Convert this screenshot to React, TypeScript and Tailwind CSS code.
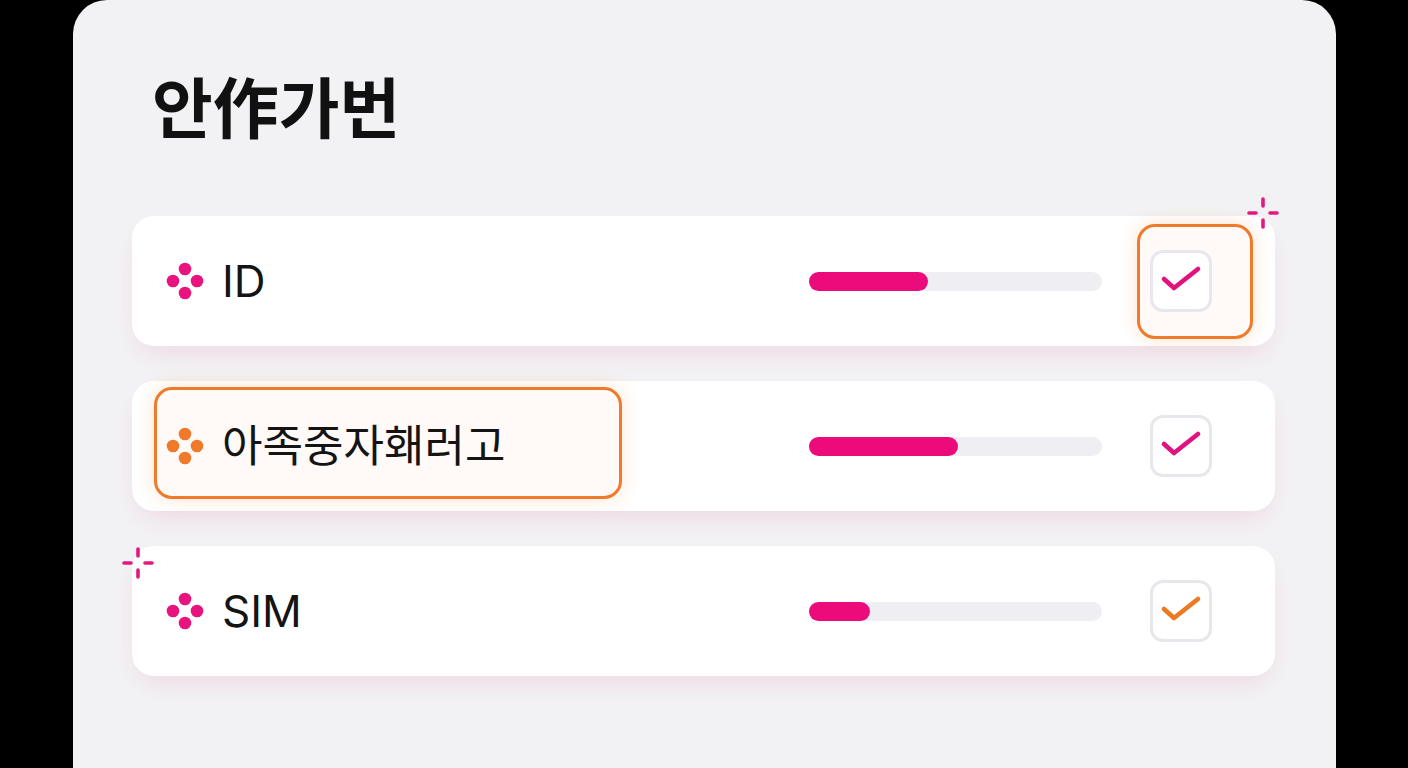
const FONT = "font-['Inter','Noto_Sans_CJK_KR',sans-serif]";

type Row = {
  label: string;
  pct: number;
  dot: string;
  check: string;
  labelRing?: boolean;
  boxRing?: boolean;
  sparkle?: boolean;
};

const rows: Row[] = [
  { label: 'ID', pct: 119, dot: '#e8137f', check: '#e0127e', boxRing: true },
  { label: '아족중자홰러고', pct: 149, dot: '#ef7a2a', check: '#e0127e', labelRing: true },
  { label: 'SIM', pct: 61, dot: '#e8137f', check: '#ec7a22', sparkle: true },
];

function Dots({ color }: { color: string }) {
  return (
    <svg width="38" height="38" viewBox="0 0 38 38" className="shrink-0">
      <circle cx="19" cy="7" r="6.3" fill={color} />
      <circle cx="7" cy="19" r="6.3" fill={color} />
      <circle cx="31" cy="19" r="6.3" fill={color} />
      <circle cx="19" cy="31" r="6.3" fill={color} />
    </svg>
  );
}

function Sparkle({ className }: { className: string }) {
  return (
    <svg width="34" height="34" viewBox="0 0 34 34" className={className}>
      <g stroke="#e2197f" strokeWidth="3.6" strokeLinecap="round">
        <line x1="17" y1="3" x2="17" y2="10" />
        <line x1="17" y1="24" x2="17" y2="31" />
        <line x1="3" y1="17" x2="10" y2="17" />
        <line x1="24" y1="17" x2="31" y2="17" />
      </g>
    </svg>
  );
}

function Check({ color, ring }: { color: string; ring?: boolean }) {
  return (
    <div className="relative">
      {ring && (
        <>
          <div className="absolute -left-[13px] -right-[41px] -top-[26px] -bottom-[27px] rounded-[18px] border-[3px] border-[#ef7a2a] bg-[#fffaf8] shadow-[0_0_18px_rgba(239,122,42,0.22)]" />
          <Sparkle className="absolute -top-[54px] left-[96px]" />
        </>
      )}
      <div className="relative h-[62px] w-[62px] rounded-[13px] border-[3px] border-[#e7e7ed] bg-white">
        <svg viewBox="3 3 56 56" className="h-full w-full">
          <path
            d="M14 29 L24 38 L48 19"
            fill="none"
            stroke={color}
            strokeWidth="4.6"
            strokeLinecap="round"
            strokeLinejoin="round"
          />
        </svg>
      </div>
    </div>
  );
}

function ItemRow({ row }: { row: Row }) {
  return (
    <div className="relative flex h-[130px] items-center rounded-[22px] bg-white pl-[34px] pr-[63px] shadow-[0_12px_28px_-8px_rgba(219,39,119,0.14)]">
      {row.sparkle && <Sparkle className="absolute -left-[11px] -top-[0px]" />}
      {row.labelRing && (
        <div className="absolute left-[22px] top-[6px] h-[112px] w-[468px] rounded-[18px] border-[3px] border-[#ef7a2a] bg-[#fffaf7] shadow-[0_0_20px_rgba(239,122,42,0.2)]" />
      )}
      <div className="relative flex flex-1 items-center gap-[18px]">
        <Dots color={row.dot} />
        <span className="text-[44px] leading-none text-[#141414]">{row.label}</span>
      </div>
      <div className="h-[19px] w-[293px] rounded-full bg-[#efeff3]">
        <div className="h-full rounded-full bg-[#ec0b7b]" style={{ width: row.pct }} />
      </div>
      <div className="ml-[48px]">
        <Check color={row.check} ring={row.boxRing} />
      </div>
    </div>
  );
}

export default function App() {
  return (
    <div className={`h-screen w-full overflow-hidden bg-black ${FONT}`}>
      <div className="ml-[73px] h-full w-[1263px] rounded-t-[34px] bg-[#f2f2f4] pl-[59px] pr-[61px] pt-[71px]">
        <h1 className="pl-5 font-['Noto_Sans_CJK_KR',sans-serif] text-[66px] font-bold leading-none text-[#111]">
          안作가번
        </h1>
        <div className="mt-[79px] flex flex-col gap-[35px]">
          {rows.map((r) => (
            <ItemRow key={r.label} row={r} />
          ))}
        </div>
      </div>
    </div>
  );
}
